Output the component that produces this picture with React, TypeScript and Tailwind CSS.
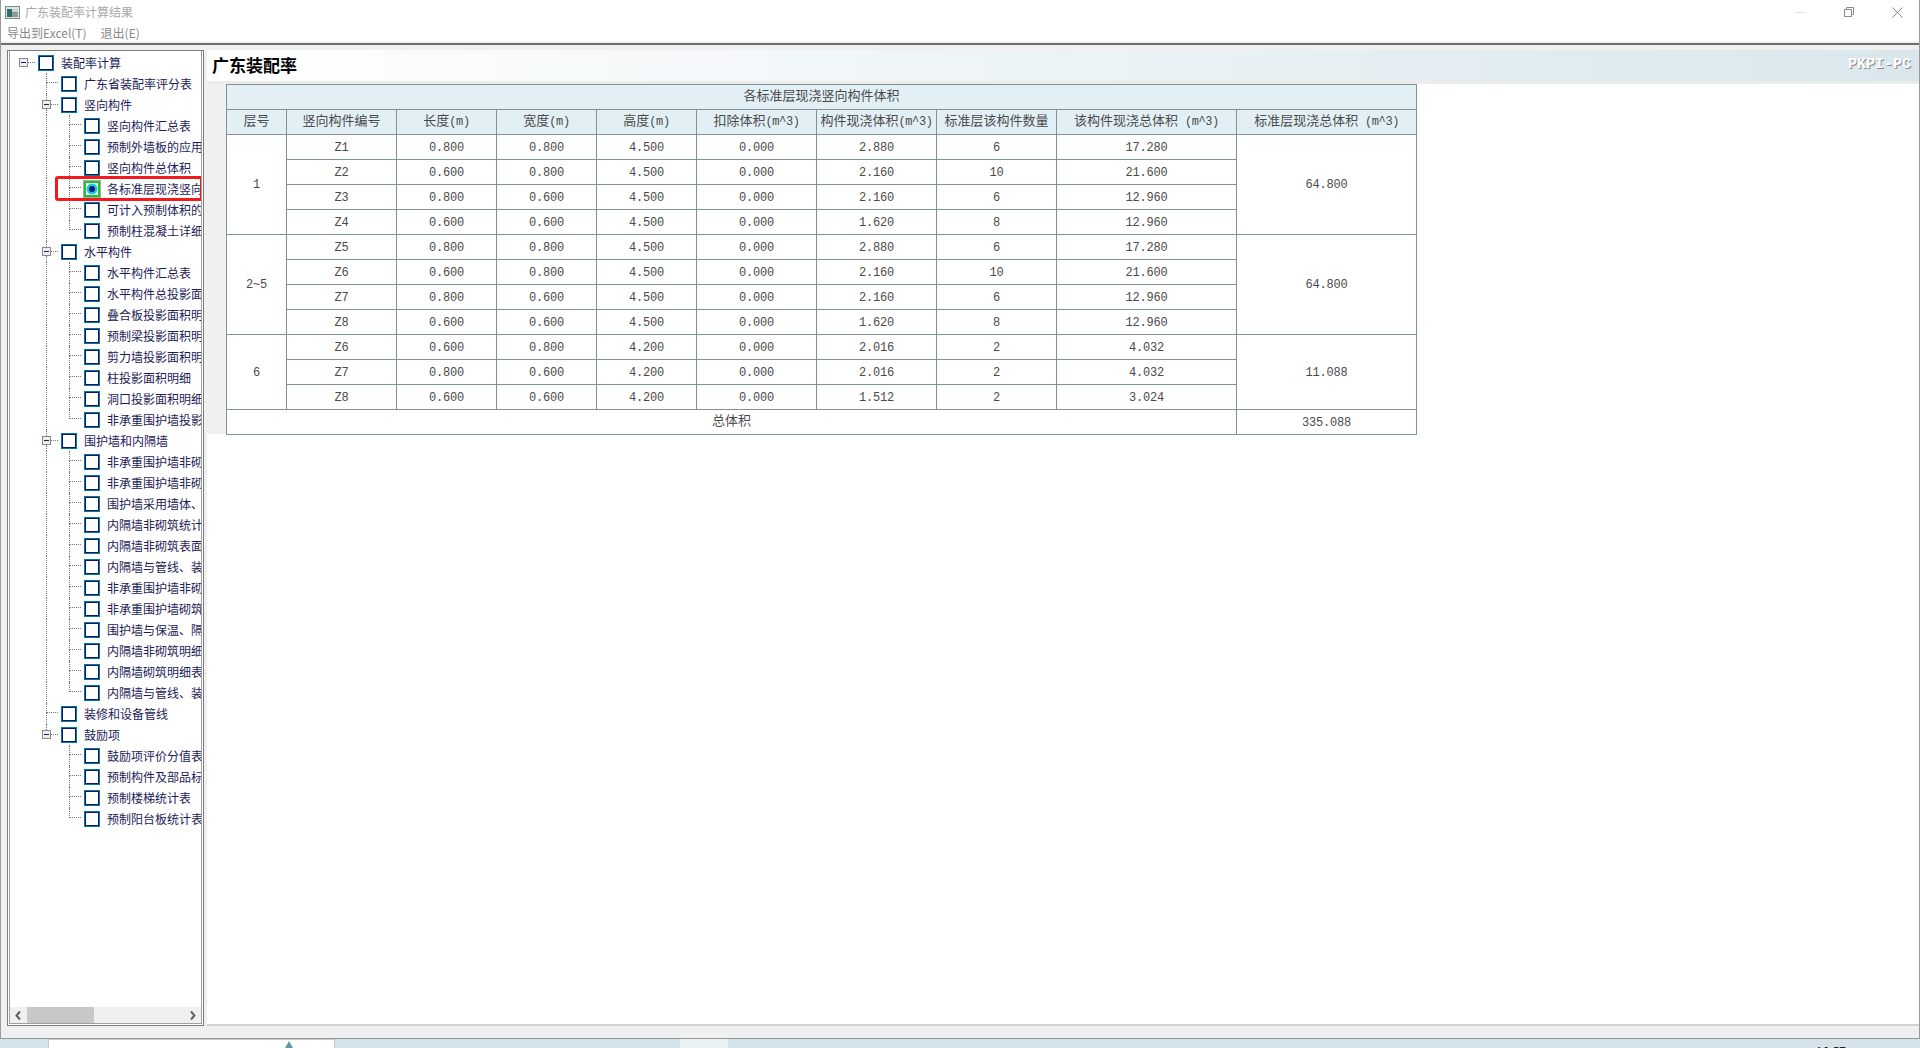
const tree: { label: string; level: number; open?: boolean; last?: boolean; on?: boolean }[] = [
  { label: "装配率计算", level: 0, open: true },
  { label: "广东省装配率评分表", level: 1 },
  { label: "竖向构件", level: 1, open: true },
  { label: "竖向构件汇总表", level: 2 },
  { label: "预制外墙板的应用比例", level: 2 },
  { label: "竖向构件总体积", level: 2 },
  { label: "各标准层现浇竖向构件体积", level: 2, on: true },
  { label: "可计入预制体积的构件", level: 2 },
  { label: "预制柱混凝土详细表", level: 2, last: true },
  { label: "水平构件", level: 1, open: true },
  { label: "水平构件汇总表", level: 2 },
  { label: "水平构件总投影面积", level: 2 },
  { label: "叠合板投影面积明细", level: 2 },
  { label: "预制梁投影面积明细", level: 2 },
  { label: "剪力墙投影面积明细", level: 2 },
  { label: "柱投影面积明细", level: 2 },
  { label: "洞口投影面积明细表", level: 2 },
  { label: "非承重围护墙投影面积", level: 2, last: true },
  { label: "围护墙和内隔墙", level: 1, open: true },
  { label: "非承重围护墙非砌筑统计", level: 2 },
  { label: "非承重围护墙非砌筑表面", level: 2 },
  { label: "围护墙采用墙体、保温", level: 2 },
  { label: "内隔墙非砌筑统计表", level: 2 },
  { label: "内隔墙非砌筑表面积", level: 2 },
  { label: "内隔墙与管线、装修", level: 2 },
  { label: "非承重围护墙非砌筑明细", level: 2 },
  { label: "非承重围护墙砌筑明细", level: 2 },
  { label: "围护墙与保温、隔热", level: 2 },
  { label: "内隔墙非砌筑明细表", level: 2 },
  { label: "内隔墙砌筑明细表", level: 2 },
  { label: "内隔墙与管线、装修明细", level: 2, last: true },
  { label: "装修和设备管线", level: 1 },
  { label: "鼓励项", level: 1, open: true },
  { label: "鼓励项评价分值表", level: 2 },
  { label: "预制构件及部品标准化", level: 2 },
  { label: "预制楼梯统计表", level: 2 },
  { label: "预制阳台板统计表", level: 2, last: true },
];

const groups = [
  {
    floor: "1",
    total: "64.800",
    rows: [
      ["Z1", "0.800", "0.800", "4.500", "0.000", "2.880", "6", "17.280"],
      ["Z2", "0.600", "0.800", "4.500", "0.000", "2.160", "10", "21.600"],
      ["Z3", "0.800", "0.600", "4.500", "0.000", "2.160", "6", "12.960"],
      ["Z4", "0.600", "0.600", "4.500", "0.000", "1.620", "8", "12.960"],
    ],
  },
  {
    floor: "2~5",
    total: "64.800",
    rows: [
      ["Z5", "0.800", "0.800", "4.500", "0.000", "2.880", "6", "17.280"],
      ["Z6", "0.600", "0.800", "4.500", "0.000", "2.160", "10", "21.600"],
      ["Z7", "0.800", "0.600", "4.500", "0.000", "2.160", "6", "12.960"],
      ["Z8", "0.600", "0.600", "4.500", "0.000", "1.620", "8", "12.960"],
    ],
  },
  {
    floor: "6",
    total: "11.088",
    rows: [
      ["Z6", "0.600", "0.800", "4.200", "0.000", "2.016", "2", "4.032"],
      ["Z7", "0.800", "0.600", "4.200", "0.000", "2.016", "2", "4.032"],
      ["Z8", "0.600", "0.600", "4.200", "0.000", "1.512", "2", "3.024"],
    ],
  },
];

const headers = [
  ["层号", ""],
  ["竖向构件编号", ""],
  ["长度", "(m)"],
  ["宽度", "(m)"],
  ["高度", "(m)"],
  ["扣除体积", "(m^3)"],
  ["构件现浇体积", "(m^3)"],
  ["标准层该构件数量", ""],
  ["该构件现浇总体积", " (m^3)"],
  ["标准层现浇总体积", " (m^3)"],
];

const widths = ["w-[60px]", "w-[110px]", "w-[100px]", "w-[100px]", "w-[100px]", "w-[120px]", "w-[120px]", "w-[120px]", "w-[180px]", "w-[180px]"];

const cell = "border border-[#7f9393] h-[25px] p-0 text-center font-normal";
const num = "text-[12px] tracking-[-0.2px] pt-px";

function Connector({ continues }: { continues: boolean }) {
  return (
    <div className="w-[23px] h-[21px] shrink-0 pl-[11px]">
      <div className="h-[10px] border-dotted border-[#777] border-l border-b" />
      <div className={`h-[11px] border-dotted border-[#777] ${continues ? "border-l" : ""}`} />
    </div>
  );
}

function Expander({ up, down }: { up: boolean; down: boolean }) {
  return (
    <div className="w-[23px] h-[21px] shrink-0 flex flex-col">
      <div className="h-[6px] ml-[11px]">
        <div className={`h-full border-dotted border-[#777] ${up ? "border-l" : ""}`} />
      </div>
      <div className="h-[9px] flex items-center pl-[7px]">
        <div className="w-[9px] h-[9px] shrink-0 border border-[#8a8a8a] bg-[#eeeeee] flex items-center justify-center">
          <div className="w-[5px] h-px bg-[#1a1a70]" />
        </div>
        <div className="w-[7px] border-b border-dotted border-[#777]" />
      </div>
      <div className="h-[6px] ml-[11px]">
        <div className={`h-full border-dotted border-[#777] ${down ? "border-l" : ""}`} />
      </div>
    </div>
  );
}

function Check({ on }: { on?: boolean }) {
  if (on) {
    return (
      <div className="w-[18px] h-[18px] -mx-px shrink-0 border border-[#a8a8a8] flex items-center justify-center">
        <div className="w-[16px] h-[16px] border-2 border-[#16c82c] flex items-center justify-center">
          <svg width="12" height="12" viewBox="0 0 12 12">
            <circle cx="6" cy="6" r="5.5" fill="#19c8dc" />
            <circle cx="6" cy="6" r="3" fill="#0a1a80" />
          </svg>
        </div>
      </div>
    );
  }
  return (
    <div className="w-4 h-4 shrink-0 border border-[#008080]">
      <div className="w-full h-full border border-[#10107a] bg-white" />
    </div>
  );
}

function TreeRow({ item, lineAtOne }: { item: (typeof tree)[number]; lineAtOne: boolean }) {
  return (
    <div className="relative flex items-center h-[21px] text-[12px] leading-[21px] text-[#1c1c58] whitespace-nowrap">
      {item.level >= 1 && <div className="w-[23px] shrink-0" />}
      {item.level === 2 && (
        <div className="w-[23px] h-[21px] shrink-0 pl-[11px]">
          <div className={`h-full border-dotted border-[#777] ${lineAtOne ? "border-l" : ""}`} />
        </div>
      )}
      {item.open ? (
        <Expander up={item.level > 0} down={item.level === 0 ? false : lineAtOne} />
      ) : (
        <Connector continues={item.level === 1 ? true : !item.last} />
      )}
      <div className="ml-[3px]">
        <Check on={item.on} />
      </div>
      <span className="ml-[7px]">{item.label}</span>
      {item.on && <div className="absolute z-10 left-[43px] top-[-2px] w-[148px] h-[25px] border-[3px] border-[#f5191e] rounded-[3px]" />}
    </div>
  );
}

export default function App() {
  const lastL1 = tree.map((t) => t.level).lastIndexOf(1);
  return (
    <div className="w-[1920px] h-[1048px] overflow-hidden flex flex-col bg-[#d4e3ea] font-['Noto_Sans_CJK_SC','Noto_Sans',sans-serif]">
      <div className="flex-1 min-h-0 flex flex-col bg-[#f0f0f0] border-x border-b border-[#9a9a9a]">
        {/* title bar */}
        <div className="h-[24px] bg-white flex items-center pl-[4px] pr-[16px] shrink-0">
          <svg width="15" height="13" viewBox="0 0 15 13" className="shrink-0">
            <rect x="0.5" y="0.5" width="14" height="12" fill="#dfe6e6" stroke="#7f8a8a" />
            <rect x="2" y="3" width="5" height="8" fill="#2f6f6a" />
            <rect x="7" y="3" width="6" height="3" fill="#c9d3d3" />
            <rect x="7" y="6" width="6" height="5" fill="#8a9a98" />
          </svg>
          <span className="ml-[5px] text-[12px] text-[#a8a8a8]">广东装配率计算结果</span>
          <div className="ml-auto flex items-center gap-[38px]">
            <div className="w-[10px] h-px bg-[#e2e2e2]" />
            <svg width="10" height="10" viewBox="0 0 10 10" fill="none" stroke="#8a8a8a">
              <path d="M2.5 2.5V.5h7v7h-2M.5 2.5h7v7h-7z" />
            </svg>
            <svg width="11" height="11" viewBox="0 0 11 11" fill="none" stroke="#8a8a8a">
              <path d="M.5.5l10 10M10.5.5l-10 10" />
            </svg>
          </div>
        </div>
        {/* menu */}
        <div className="h-[17px] bg-white flex items-center gap-[14px] pl-[6px] text-[12px] text-[#8a8a8a] shrink-0">
          <span>导出到Excel(T)</span>
          <span>退出(E)</span>
        </div>
        <div className="h-[4px] bg-[#f0f0f0] border-b-2 border-[#6e6e6e] shrink-0" />
        <div className="flex-1 min-h-0 flex pt-[5px] pl-[6px] pb-[12px]">
          {/* tree */}
          <div className="w-[197px] shrink-0 flex flex-col border border-[#7c7c7c] bg-white px-px pb-px">
            <div className="flex-1 min-h-0 border-x border-[#a0a0a0] overflow-hidden pl-[2px] pt-px">
              {tree.map((t, i) => (
                <TreeRow key={i} item={t} lineAtOne={i < lastL1} />
              ))}
            </div>
            <div className="h-[17px] shrink-0 bg-[#f0f0f0] flex items-center border-x border-b border-[#a0a0a0] text-[#606060]">
              <svg width="17" height="17" viewBox="0 0 17 17" fill="none" stroke="#606060" strokeWidth="2" className="shrink-0">
                <path d="M10 4.5L6.5 8.5 10 12.5" />
              </svg>
              <div className="w-[67px] h-[16px] bg-[#c8c8c8]" />
              <svg width="17" height="17" viewBox="0 0 17 17" fill="none" stroke="#606060" strokeWidth="2" className="ml-auto shrink-0">
                <path d="M7 4.5L10.5 8.5 7 12.5" />
              </svg>
            </div>
          </div>
          {/* content */}
          <div className="flex-1 min-w-0 ml-[3px] flex flex-col bg-white border-b-2 border-[#d2d2d2]">
            <div className="h-[31px] shrink-0 pl-[5px] flex items-center justify-between pr-[8px] bg-gradient-to-r from-white to-[#d9e7ec]">
              <span className="text-[17px] font-bold text-black pb-[2px]">广东装配率</span>
              <span className="text-[15px] font-bold text-white font-['Liberation_Mono',monospace] [text-shadow:1px_1px_0_#8a8a8a]">PKPI-PC</span>
            </div>
            <div className="h-[3px] shrink-0 bg-[#ececec]" />
            <div className="flex items-start">
              <div className="w-[19px] h-[350px] shrink-0 bg-[#f0f0f0]" />
              <table className="table-fixed border-collapse w-[1190px] text-[13px] text-[#4a4a4a] font-['Liberation_Mono','Noto_Sans_CJK_SC',monospace]">
                <colgroup>
                  {widths.map((w, i) => (
                    <col key={i} className={w} />
                  ))}
                </colgroup>
                <thead>
                  <tr className="bg-[#e2f0f6]">
                    <th colSpan={10} className={cell}>
                      各标准层现浇竖向构件体积
                    </th>
                  </tr>
                  <tr className="bg-[#e2f0f6]">
                    {headers.map(([h, unit]) => (
                      <th key={h} className={`${cell} whitespace-nowrap`}>
                        {h}
                        <span className="text-[12px] tracking-[-0.4px]">{unit}</span>
                      </th>
                    ))}
                  </tr>
                </thead>
                <tbody>
                  {groups.map((g) =>
                    g.rows.map((r, i) => (
                      <tr key={g.floor + r[0]}>
                        {i === 0 && (
                          <td rowSpan={g.rows.length} className={`${cell} ${num}`}>
                            {g.floor}
                          </td>
                        )}
                        {r.map((v, j) => (
                          <td key={j} className={`${cell} ${num}`}>
                            {v}
                          </td>
                        ))}
                        {i === 0 && (
                          <td rowSpan={g.rows.length} className={`${cell} ${num}`}>
                            {g.total}
                          </td>
                        )}
                      </tr>
                    )),
                  )}
                  <tr>
                    <td colSpan={9} className={cell}>
                      总体积
                    </td>
                    <td className={`${cell} ${num}`}>335.088</td>
                  </tr>
                </tbody>
              </table>
            </div>
          </div>
        </div>
      </div>
      {/* taskbar strip */}
      <div className="h-[9px] shrink-0 flex overflow-hidden">
        <div className="w-[48px]" />
        <div className="w-[287px] h-[9px] bg-white border-x border-t border-[#c8c8c8] flex justify-end pr-[40px]">
          <svg width="10" height="8" viewBox="0 0 10 8">
            <path d="M5 1L9 8H1z" fill="#5f9ca0" />
          </svg>
        </div>
        <div className="w-[345px]" />
        <div className="w-[48px] bg-[#e8f1f4]" />
        <div className="flex-1 flex justify-end pr-[74px]">
          <span className="text-[12px] leading-[14px] text-[#222] mt-[5px]">10:57</span>
        </div>
      </div>
    </div>
  );
}
